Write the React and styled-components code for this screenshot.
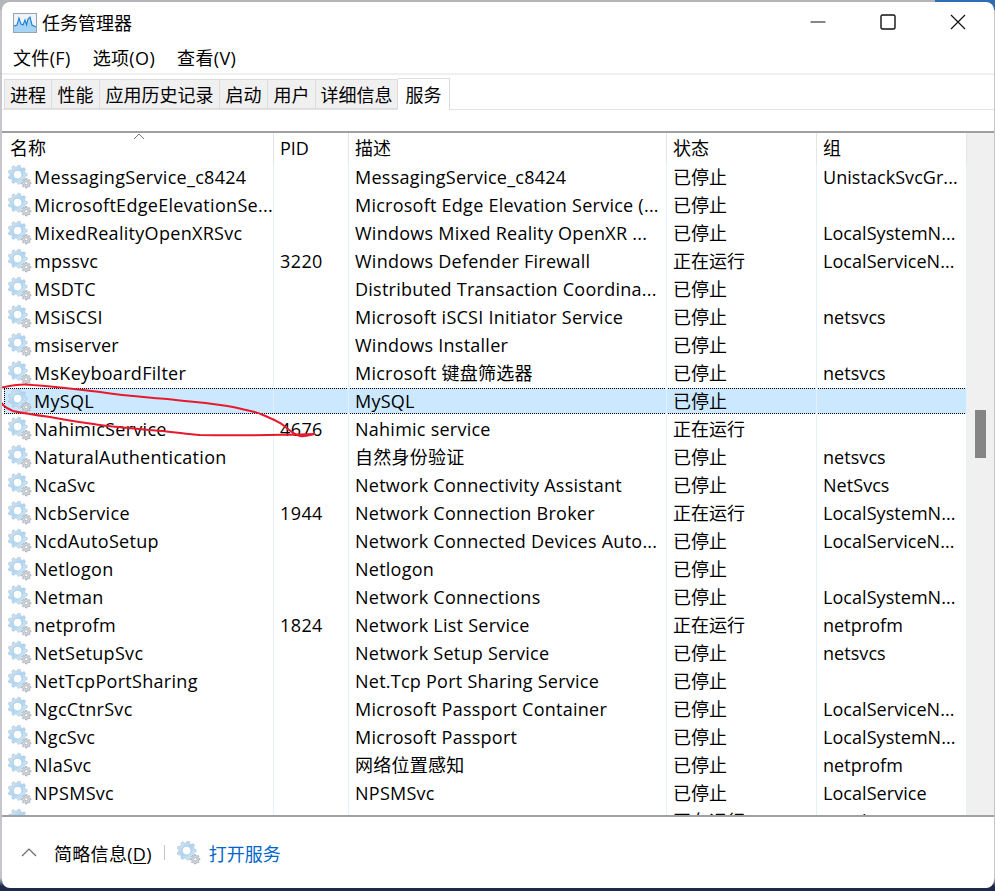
import React from "react";
import styled, { createGlobalStyle } from "styled-components";

const Global = createGlobalStyle`
  html, body { margin: 0; padding: 0; width: 995px; height: 891px; overflow: hidden; background: #c9cbd0; }
  #root { width: 995px; height: 891px; }
`;

const FONT = `"Open Sans", "Noto Sans CJK SC", sans-serif`;

const Desktop = styled.div`
  width: 995px;
  height: 891px;
  box-sizing: border-box;
  padding: 2px 1px 3px 2px;
  overflow: hidden;
  background:
    linear-gradient(to right, #b4b5b8 0, #b4b5b8 935px, #2f6cb4 935px, #2f6cb4 100%) top / 100% 10px no-repeat,
    linear-gradient(to bottom, #c4c6ca 0, #c4c6ca 878px, #1d2a4a 886px, #1d2a4a 100%);
  font-family: ${FONT};
  font-size: 18px;
  color: #000;
`;

const Window = styled.div`
  position: relative;
  height: 100%;
  display: flex;
  flex-direction: column;
  background: #fff;
  border-radius: 8px;
  overflow: hidden;
`;

const TitleBar = styled.div`
  height: 42px;
  flex: none;
  display: flex;
  align-items: center;
  padding: 0 1px 0 11px;
`;
const TitleText = styled.div`
  flex: 1;
  margin-left: 5px;
  line-height: 42px;
`;
const WinButton = styled.div`
  width: 70px;
  height: 40px;
  align-self: flex-start;
  display: flex;
  align-items: center;
  justify-content: center;
`;

const MenuBar = styled.div`
  height: 29px;
  flex: none;
  display: flex;
  align-items: center;
  gap: 22px;
  padding-left: 11px;
  border-bottom: 2px solid #f0f0f0;
`;
const MenuItem = styled.div`
  line-height: 29px;
  letter-spacing: 0.35px;
`;

const TabStrip = styled.div`
  height: 34px;
  flex: none;
  display: flex;
  align-items: flex-end;
  padding-left: 2px;
  border-bottom: 1px solid #e3e3e3;
`;
const Tab = styled.div`
  box-sizing: border-box;
  width: ${(p) => p.$w}px;
  height: ${(p) => (p.$active ? 32 : 30)}px;
  padding-bottom: ${(p) => (p.$active ? 2 : 0)}px;
  display: flex;
  align-items: center;
  justify-content: center;
  background: ${(p) => (p.$active ? "#fff" : "#f0f0f0")};
  border: 1px solid #dcdcdc;
  border-bottom: ${(p) => (p.$active ? "none" : "1px solid #dcdcdc")};
  border-left-width: ${(p) => (p.$first ? 1 : 0)}px;
  margin-bottom: ${(p) => (p.$active ? -1 : 0)}px;
`;
const Spacer = styled.div`
  height: 21px;
  flex: none;
`;

const TableArea = styled.div`
  flex: 1;
  min-height: 0;
  display: flex;
  padding-left: 2px;
  border-top: 2px solid #a0a0a0;
  overflow: hidden;
`;
const Table = styled.div`
  width: 963px;
  flex: none;
`;
const HeaderRow = styled.div`
  position: relative;
  display: grid;
  grid-template-columns: 270px 75px 318px 150px 150px;
  height: 30px;
`;
const HeaderCell = styled.div`
  padding-left: 6px;
  line-height: 30px;
  border-right: 1px solid #e5e5e5;
`;
const SortArrow = styled.svg`
  position: absolute;
  left: 129px;
  top: 0;
`;
const Row = styled.div`
  position: relative;
  display: grid;
  grid-template-columns: 270px 75px 318px 150px 150px;
  height: 28px;
  ${(p) =>
    p.$selected &&
    `&::before {
      content: "";
      position: absolute;
      inset: 1px 0;
      background: #cce8ff;
      outline: 1px dotted #000;
      outline-offset: -1px;
    }`}
`;
const Cell = styled.div`
  position: relative;
  box-sizing: border-box;
  display: flex;
  align-items: center;
  gap: 2px;
  padding-left: ${(p) => (p.$first ? 4 : 6)}px;
  border-right: 1px solid #e6f0fb;
  white-space: nowrap;
  overflow: hidden;
  line-height: 28px;
  letter-spacing: ${(p) => p.$ls}px;
`;
const Scrollbar = styled.div`
  flex: 1;
  position: relative;
  background: #f0f0f0;
`;
const Thumb = styled.div`
  position: absolute;
  left: 8px;
  top: 277px;
  width: 11px;
  height: 48px;
  background: #858585;
`;

const Footer = styled.div`
  height: 73px;
  flex: none;
  border-top: 2px solid #a0a0a0;
  display: flex;
  align-items: center;
  padding-left: 19px;
  box-sizing: border-box;
`;
const Details = styled.div`
  margin-left: 17px;
  letter-spacing: 0.3px;
  u { text-underline-offset: 2px; }
`;
const Divider = styled.div`
  width: 1px;
  height: 15px;
  background: #c4c4c4;
  margin: 0 12px;
`;
const OpenServices = styled.div`
  margin-left: 8px;
  color: #0066cc;
`;
const Annotation = styled.svg`
  position: absolute;
  left: -2px;
  top: -2px;
  pointer-events: none;
`;

function gearPath(cx, cy, r, R, teeth) {
  const pts = [];
  const step = (Math.PI * 2) / teeth;
  for (let i = 0; i < teeth; i++) {
    const a = i * step;
    [[-0.32, r], [-0.16, R], [0.16, R], [0.32, r]].forEach(([o, rad]) => {
      const t = a + o * step;
      pts.push(`${(cx + rad * Math.cos(t)).toFixed(2)} ${(cy + rad * Math.sin(t)).toFixed(2)}`);
    });
  }
  return `M${pts.join("L")}Z`;
}
const BIG = gearPath(10, 10, 8, 10, 9);
const SMALL = gearPath(19, 19, 3.6, 5, 8);

const GearIcon = ({ size = 24 }) => (
  <svg width={size} height={size} viewBox="0 0 25 25" style={{ flex: "none" }} aria-hidden="true">
    <defs>
      <linearGradient id="gearBig" x1="0" y1="0" x2="1" y2="1">
        <stop offset="0" stopColor="#dfe8ef" />
        <stop offset="0.5" stopColor="#a9d6f6" />
        <stop offset="1" stopColor="#e8f2fa" />
      </linearGradient>
    </defs>
    <path d={BIG} fill="url(#gearBig)" stroke="#aebfcc" strokeWidth="0.6" />
    <circle cx="10" cy="10" r="4.6" fill="#fff" stroke="#a7c2d6" strokeWidth="0.8" />
    <path d={SMALL} fill="#d5d9dd" stroke="#8a96a0" strokeWidth="0.6" />
    <circle cx="19" cy="19" r="1.7" fill="#fff" stroke="#8a96a0" strokeWidth="0.6" />
  </svg>
);

const TaskIcon = () => (
  <svg width="24" height="20" viewBox="0 0 24 20" aria-hidden="true">
    <rect x="0.5" y="0.5" width="23" height="19" fill="#eef4fa" stroke="#9aa3ad" />
    <path d="M1 19V13L4 12 6 5 8 11 10 12 12 7 13.500 12 15 6 17 4 19 12 23 14V19Z" fill="#a5d4f7" />
    <path d="M1 13L4 12 6 5 8 11 10 12 12 7 13.500 12 15 6 17 4 19 12 23 14" fill="none" stroke="#1f7fd0" strokeWidth="1.1" />
  </svg>
);

const tabs = [
  ["进程", 48], ["性能", 48], ["应用历史记录", 120], ["启动", 48], ["用户", 48], ["详细信息", 82], ["服务", 52],
];

const rows = [
  ["MessagingService_c8424", "", "MessagingService_c8424", "已停止", "UnistackSvcGr..."],
  ["MicrosoftEdgeElevationSe...", "", "Microsoft Edge Elevation Service (...", "已停止", ""],
  ["MixedRealityOpenXRSvc", "", "Windows Mixed Reality OpenXR ...", "已停止", "LocalSystemN..."],
  ["mpssvc", "3220", "Windows Defender Firewall", "正在运行", "LocalServiceN..."],
  ["MSDTC", "", "Distributed Transaction Coordina...", "已停止", ""],
  ["MSiSCSI", "", "Microsoft iSCSI Initiator Service", "已停止", "netsvcs"],
  ["msiserver", "", "Windows Installer", "已停止", ""],
  ["MsKeyboardFilter", "", "Microsoft 键盘筛选器", "已停止", "netsvcs"],
  ["MySQL", "", "MySQL", "已停止", ""],
  ["NahimicService", "4676", "Nahimic service", "正在运行", ""],
  ["NaturalAuthentication", "", "自然身份验证", "已停止", "netsvcs"],
  ["NcaSvc", "", "Network Connectivity Assistant", "已停止", "NetSvcs"],
  ["NcbService", "1944", "Network Connection Broker", "正在运行", "LocalSystemN..."],
  ["NcdAutoSetup", "", "Network Connected Devices Auto...", "已停止", "LocalServiceN..."],
  ["Netlogon", "", "Netlogon", "已停止", ""],
  ["Netman", "", "Network Connections", "已停止", "LocalSystemN..."],
  ["netprofm", "1824", "Network List Service", "正在运行", "netprofm"],
  ["NetSetupSvc", "", "Network Setup Service", "已停止", "netsvcs"],
  ["NetTcpPortSharing", "", "Net.Tcp Port Sharing Service", "已停止", ""],
  ["NgcCtnrSvc", "", "Microsoft Passport Container", "已停止", "LocalServiceN..."],
  ["NgcSvc", "", "Microsoft Passport", "已停止", "LocalSystemN..."],
  ["NlaSvc", "", "网络位置感知", "已停止", "netprofm"],
  ["NPSMSvc", "", "NPSMSvc", "已停止", "LocalService"],
  ["NPSMSvc_c8424", "8496", "NPSMSvc_c8424", "正在运行", "LocalSystemN..."],
];

export default function App() {
  return (
    <Desktop>
      <Global />
      <Window>
        <TitleBar>
          <TaskIcon />
          <TitleText>任务管理器</TitleText>
          <WinButton>
            <svg width="16" height="16" viewBox="0 0 16 16"><path d="M0.500 8H15.500" stroke="#111" strokeWidth="1.2" /></svg>
          </WinButton>
          <WinButton>
            <svg width="16" height="16" viewBox="0 0 16 16"><rect x="1" y="1" width="14" height="14" rx="1.500" fill="none" stroke="#111" strokeWidth="1.4" /></svg>
          </WinButton>
          <WinButton>
            <svg width="16" height="16" viewBox="0 0 16 16"><path d="M1 1L15 15M15 1L1 15" stroke="#111" strokeWidth="1.2" /></svg>
          </WinButton>
        </TitleBar>
        <MenuBar>
          <MenuItem>文件(F)</MenuItem>
          <MenuItem>选项(O)</MenuItem>
          <MenuItem>查看(V)</MenuItem>
        </MenuBar>
        <TabStrip>
          {tabs.map(([label, w], i) => (
            <Tab key={label} $w={w} $first={i === 0} $active={label === "服务"}>{label}</Tab>
          ))}
        </TabStrip>
        <Spacer />
        <TableArea>
          <Table>
            <HeaderRow>
              <SortArrow width="12" height="7" viewBox="0 0 12 7"><path d="M1 6L6 1 11 6" fill="none" stroke="#777" strokeWidth="1" /></SortArrow>
              <HeaderCell>名称</HeaderCell>
              <HeaderCell>PID</HeaderCell>
              <HeaderCell>描述</HeaderCell>
              <HeaderCell>状态</HeaderCell>
              <HeaderCell>组</HeaderCell>
            </HeaderRow>
            {rows.map((r) => (
              <Row key={r[0]} $selected={r[0] === "MySQL"}>
                <Cell $first $ls={0.3}><GearIcon />{r[0]}</Cell>
                <Cell $ls={0.4}>{r[1]}</Cell>
                <Cell $ls={0.25}>{r[2]}</Cell>
                <Cell $ls={0}>{r[3]}</Cell>
                <Cell $ls={0.05}>{r[4]}</Cell>
              </Row>
            ))}
          </Table>
          <Scrollbar><Thumb /></Scrollbar>
        </TableArea>
        <Footer>
          <svg width="16" height="9" viewBox="0 0 16 9"><path d="M1 8L8 1 15 8" fill="none" stroke="#666" strokeWidth="1.2" /></svg>
          <Details>简略信息(<u>D</u>)</Details>
          <Divider />
          <GearIcon />
          <OpenServices>打开服务</OpenServices>
        </Footer>
        <Annotation width="995" height="891" viewBox="0 0 995 891" fill="none">
          <path
            d="M0 388C12 385 24 384 33 385C60 387 80 390 100 392C125 396 145 397 167 399C190 402 212 403 233 407C245 410 255 411 263 415C272 419 278 421 283 425C290 431 295 435 300 436C305 437 310 435 315 434C280 435 240 436 200 435C180 433 165 431 150 430C130 428 115 427 100 425C80 422 65 420 50 417C35 415 22 413 13 411C8 409 5 407 3 405C2 403 1 402 0 401"
            stroke="#e8192c"
            strokeWidth="2"
            strokeLinecap="round"
          />
        </Annotation>
      </Window>
    </Desktop>
  );
}
